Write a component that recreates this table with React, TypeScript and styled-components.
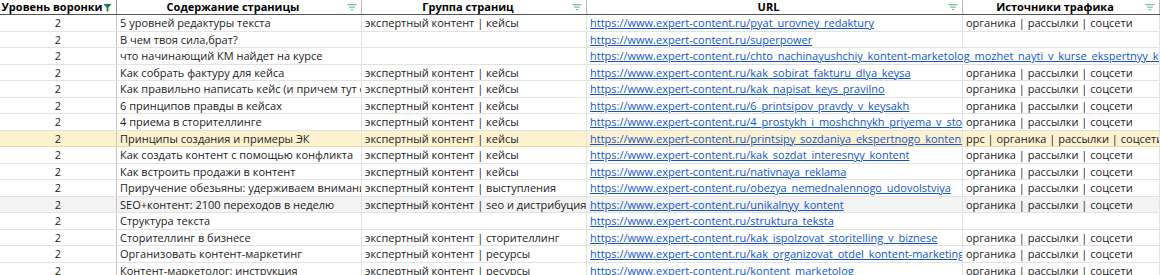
import React from "react";
import styled, { createGlobalStyle } from "styled-components";

const GlobalStyle = createGlobalStyle`
  body {
    margin: 0;
    background: #fff;
    overflow: hidden;
  }
`;

const BASE = "https://www.expert-content.ru/";
const COLS = "117px 245px 225px 376px 1fr";

interface RowData {
  level: string;
  title: string;
  group: string;
  slug: string;
  source: string;
  spill?: boolean;
  tone?: "yellow" | "grey";
}

const SRC = "органика | рассылки | соцсети";
const CASES = "экспертный контент | кейсы";

const rows: RowData[] = [
  { level: "2", title: "5 уровней редактуры текста", group: CASES, slug: "pyat_urovney_redaktury", source: SRC },
  { level: "2", title: "В чем твоя сила,брат?", group: "", slug: "superpower", source: "" },
  {
    level: "2",
    title: "что начинающий КМ найдет на курсе",
    group: "",
    slug: "chto_nachinayushchiy_kontent-marketolog_mozhet_nayti_v_kurse_ekspertnyy_kontent",
    source: "",
    spill: true,
  },
  { level: "2", title: "Как собрать фактуру для кейса", group: CASES, slug: "kak_sobirat_fakturu_dlya_keysa", source: SRC },
  { level: "2", title: "Как правильно написать кейс (и причем тут сторителлинг)", group: CASES, slug: "kak_napisat_keys_pravilno", source: SRC },
  { level: "2", title: "6 принципов правды в кейсах", group: CASES, slug: "6_printsipov_pravdy_v_keysakh", source: SRC },
  { level: "2", title: "4 приема в сторителлинге", group: CASES, slug: "4_prostykh_i_moshchnykh_priyema_v_storitellinge", source: SRC },
  {
    level: "2",
    title: "Принципы создания и примеры ЭК",
    group: CASES,
    slug: "printsipy_sozdaniya_ekspertnogo_kontenta",
    source: "ppc | органика | рассылки | соцсети",
    tone: "yellow",
  },
  { level: "2", title: "Как создать контент с помощью конфликта", group: CASES, slug: "kak_sozdat_interesnyy_kontent", source: SRC },
  { level: "2", title: "Как встроить продажи в контент", group: CASES, slug: "nativnaya_reklama", source: SRC },
  {
    level: "2",
    title: "Приручение обезьяны: удерживаем внимание",
    group: "экспертный контент | выступления",
    slug: "obezya_nemednalennogo_udovolstviya",
    source: SRC,
  },
  {
    level: "2",
    title: "SEO+контент: 2100 переходов в неделю",
    group: "экспертный контент | seo и дистрибуция",
    slug: "unikalnyy_kontent",
    source: SRC,
    tone: "grey",
  },
  { level: "2", title: "Структура текста", group: "", slug: "struktura_teksta", source: "" },
  {
    level: "2",
    title: "Сторителлинг в бизнесе",
    group: "экспертный контент | сторителлинг",
    slug: "kak_ispolzovat_storitelling_v_biznese",
    source: SRC,
  },
  {
    level: "2",
    title: "Организовать контент-маркетинг",
    group: "экспертный контент | ресурсы",
    slug: "kak_organizovat_otdel_kontent-marketinga",
    source: SRC,
  },
  {
    level: "2",
    title: "Контент-маркетолог: инструкция",
    group: "экспертный контент | ресурсы",
    slug: "kontent_marketolog",
    source: SRC,
  },
];

const ActiveFilter = () => (
  <svg width="9" height="9" viewBox="0 0 9 9">
    <path d="M0.5 1h8L5.4 4.6V8.5H3.6V4.6z" fill="#188038" />
  </svg>
);

const IdleFilter = () => (
  <svg width="10" height="8" viewBox="0 0 10 8">
    <rect x="0.5" y="1" width="9" height="1.3" fill="#7cc59a" />
    <rect x="2.2" y="3.5" width="5.6" height="1.3" fill="#7cc59a" />
    <rect x="3.8" y="6" width="2.4" height="1.3" fill="#7cc59a" />
  </svg>
);

const headers = ["Уровень воронки", "Содержание страницы", "Группа страниц", "URL", "Источники трафика"];

const App = () => (
  <>
    <GlobalStyle />
    <Sheet>
      <HeaderRow>
        {headers.map((h, i) => (
          <HeadCell key={h} first={i === 0}>
            <HeadLabel>{h}</HeadLabel>
            <FilterSlot>{i === 0 ? <ActiveFilter /> : <IdleFilter />}</FilterSlot>
          </HeadCell>
        ))}
      </HeaderRow>
      {rows.map((r, idx) => (
        <Row key={idx} tone={r.tone}>
          <Cell first center>
            {r.level}
          </Cell>
          <Cell>{r.title}</Cell>
          <Cell>{r.group}</Cell>
          <Cell span={r.spill ? 2 : 1}>
            <Link>{BASE + r.slug}</Link>
          </Cell>
          {!r.spill && <Cell last>{r.source}</Cell>}
        </Row>
      ))}
    </Sheet>
  </>
);

const Sheet = styled.div`
  width: 1160px;
  height: 275px;
  overflow: hidden;
  font-family: "Open Sans", "Liberation Sans", sans-serif;
  font-size: 11px;
  color: #222;
`;

const HeaderRow = styled.div`
  display: grid;
  grid-template-columns: ${COLS};
  height: 14px;
  border-bottom: 1.5px solid #555;
`;

const HeadCell = styled.div<{ first?: boolean }>`
  position: relative;
  display: flex;
  align-items: center;
  justify-content: center;
  border-right: 1px solid ${(p) => (p.first ? "#9a9a9a" : "#b8b8b8")};
  padding: 0 14px 0 2px;
  overflow: hidden;
  white-space: nowrap;
`;

const HeadLabel = styled.span`
  font-weight: 700;
  color: #000;
  line-height: 14px;
`;

const FilterSlot = styled.span`
  position: absolute;
  right: 4px;
  top: 3px;
  display: flex;
`;

const Row = styled.div<{ tone?: "yellow" | "grey" }>`
  display: grid;
  grid-template-columns: ${COLS};
  height: 16.5px;
  box-sizing: border-box;
  background: ${(p) => (p.tone === "yellow" ? "#fdf2d0" : p.tone === "grey" ? "#f3f3f3" : "#fff")};
  border-bottom: 1px solid ${(p) => (p.tone === "yellow" ? "#ecd9a4" : "#e2e2e2")};
`;

const Cell = styled.div<{ first?: boolean; center?: boolean; last?: boolean; span?: number }>`
  grid-column: span ${(p) => p.span ?? 1};
  overflow: hidden;
  white-space: nowrap;
  padding: 0 3px;
  line-height: 15.5px;
  text-align: ${(p) => (p.center ? "center" : "left")};
  border-right: 1px solid ${(p) => (p.first ? "#c4c4c4" : "#e2e2e2")};
`;

const Link = styled.span`
  color: #1155cc;
  text-decoration: underline;
`;

export default App;
